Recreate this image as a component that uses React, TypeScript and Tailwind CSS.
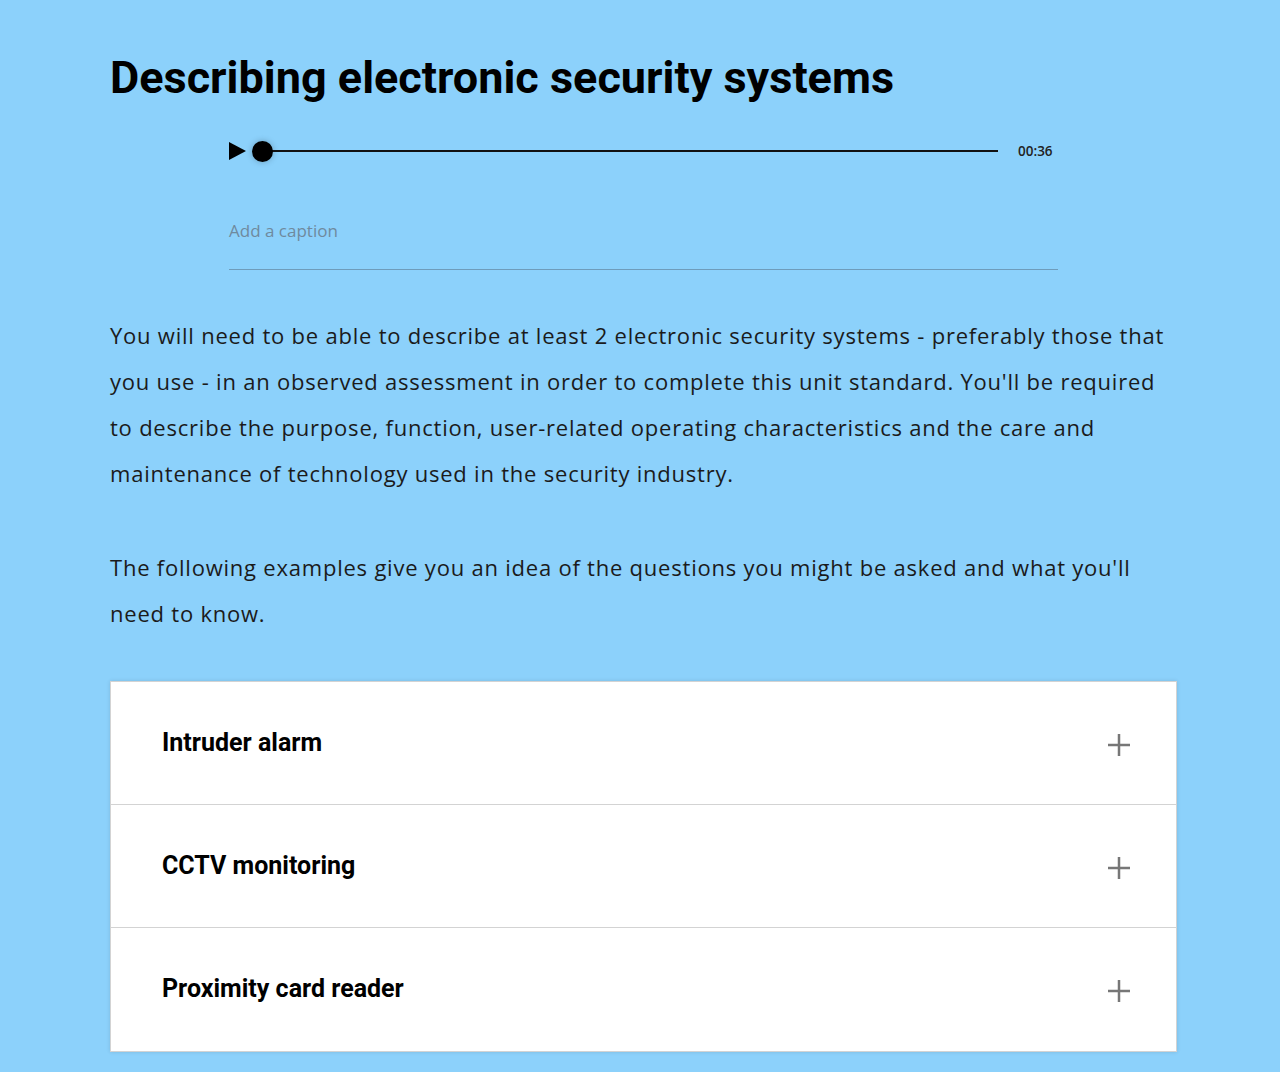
import React from "react";

const items = ["Intruder alarm", "CCTV monitoring", "Proximity card reader"];

export default function App() {
  return (
    <div className="min-h-[1072px] w-full bg-[#8cd1fb]">
      <div className="ml-[110px] w-[1067px] pt-[52px]">
        <h1 className="text-[45px] font-bold leading-[52px] text-black" style={{ fontFamily: "Roboto, sans-serif" }}>
          Describing electronic security systems
        </h1>
        <div className="ml-[119px] w-[829px]">
          <div className="mt-[35px] flex h-[24px] items-center">
            <svg width="17" height="18" viewBox="0 0 17 18">
              <polygon points="0,0 17,9 0,18" fill="#000" />
            </svg>
            <div className="relative ml-[6px] flex items-center">
              <div className="z-10 h-[21px] w-[21px] rounded-full bg-black shadow-[0_0_6px_rgba(0,0,0,0.25)]" />
              <div className="ml-[-10px] h-[1.5px] w-[735px] bg-[#111]" />
            </div>
            <span className="ml-[20px] text-[13.5px] font-semibold text-[#222]" style={{ fontFamily: "'Open Sans', sans-serif" }}>
              00:36
            </span>
          </div>
          <div className="mt-[55px] border-b-[1.5px] border-[#6e9cbb] pb-[25px]">
            <span className="text-[17px] text-[#6f8a9e]" style={{ fontFamily: "'Open Sans', sans-serif" }}>
              Add a caption
            </span>
          </div>
        </div>
        <div className="mt-[42px] w-[1066px] text-[22px] leading-[46px] tracking-[0.78px] text-[#1b1b1b]" style={{ fontFamily: "'Open Sans', sans-serif" }}>
          <p>
            You will need to be able to describe at least 2 electronic security systems - preferably those that you use - in an observed assessment in order to complete this unit standard. You'll be required to describe the purpose, function, user-related operating characteristics and the care and maintenance of technology used in the security industry.
          </p>
          <p className="mt-[48px]">
            The following examples give you an idea of the questions you might be asked and what you'll need to know.
          </p>
        </div>
        <div className="mt-[45px] border border-[#d3d3d3] bg-white shadow-[0_0_4px_rgba(0,0,0,0.12)]">
          {items.map((t, i) => (
            <div
              key={t}
              className={`flex h-[123px] items-center justify-between pl-[51px] pr-[45px] ${i < items.length - 1 ? "border-b border-[#d3d3d3]" : ""}`}
            >
              <span className="text-[25px] font-bold text-black" style={{ fontFamily: "Roboto, sans-serif" }}>
                {t}
              </span>
              <svg width="24" height="24" viewBox="0 0 24 24" className="mt-[4px]">
                <path d="M12 1v22M1 12h22" stroke="#777" strokeWidth="2.5" />
              </svg>
            </div>
          ))}
        </div>
      </div>
    </div>
  );
}
